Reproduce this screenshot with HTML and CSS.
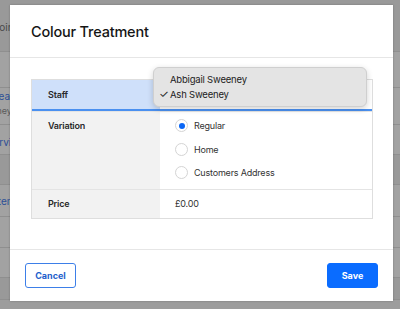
FILE: index.html
```html
<!DOCTYPE html>
<html lang="en">
<head>
    <meta charset="UTF-8">
    <meta name="viewport" content="width=device-width, initial-scale=1.0">
    <title>Colour Treatment</title>
    <link rel="stylesheet" href="styles.css">
</head>
<body>
    <!-- page behind the dialog, dimmed -->
    <div class="page">
        <div class="page-row r52 dark"><div class="cell"><span class="cut point">Point</span></div></div>
        <div class="page-row r36"></div>
        <div class="page-row r37"><div class="cell stack"><span class="cut link treat">Treat</span><span class="cut small">Sweeney</span></div></div>
        <div class="page-row r30"><div class="cell low"><span class="cut link serv">Servi</span></div></div>
        <div class="page-row r30 dark"></div>
        <div class="page-row r32"><div class="cell"><span class="cut link item">Items</span></div></div>
        <div class="page-row r31"></div>
        <div class="page-row r30"></div>
        <div class="page-row r22 dark"></div>
    </div>

    <div class="modal">
        <div class="modal-header">
            <h1>Colour Treatment</h1>
        </div>

        <div class="modal-body">
            <div class="details">
                <div class="row staff">
                    <div class="label">Staff</div>
                    <div class="value"></div>
                </div>
                <div class="row variation">
                    <div class="label">Variation</div>
                    <div class="value options">
                        <label class="option"><span class="radio checked"></span>Regular</label>
                        <label class="option"><span class="radio"></span>Home</label>
                        <label class="option"><span class="radio"></span>Customers Address</label>
                    </div>
                </div>
                <div class="row">
                    <div class="label">Price</div>
                    <div class="value">£0.00</div>
                </div>

                <div class="dropdown">
                    <div class="dropdown-item">Abbigail Sweeney</div>
                    <div class="dropdown-item selected"><span class="tick">✓</span>Ash Sweeney</div>
                </div>
            </div>
        </div>

        <div class="modal-footer">
            <button class="btn btn-outline">Cancel</button>
            <button class="btn btn-primary">Save</button>
        </div>
    </div>
</body>
</html>
```

FILE: styles.css
```css
body {
    margin: 0;
    padding: 0;
    background-color: #9d9d9d;
    font-family: 'Inter', 'Noto Sans', sans-serif;
    color: #222;
    overflow: hidden;
}

.page {
    display: flex;
    flex-direction: column;
    height: 309px;
}

.page-row {
    border-bottom: 1px solid #8f8f8f;
    background-color: #a2a2a2;
    display: flex;
    font-size: 10px;
    color: #4a4a4a;
    box-sizing: border-box;
    flex-shrink: 0;
}

.page-row.dark {
    background-color: #999;
}

.r22 { height: 22px; }
.r30 { height: 30px; }
.r31 { height: 31px; }
.r32 { height: 32px; }
.r36 { height: 36px; }
.r37 { height: 37px; }
.r52 { height: 52px; }

.cell {
    width: 10px;
    overflow: hidden;
    white-space: nowrap;
    display: flex;
    align-items: center;
}

.r52 .cell {
    padding-top: 3px;
}

.cell.stack {
    flex-direction: column;
    align-items: flex-start;
    padding-top: 2px;
}

.cell.low {
    padding-top: 4px;
}

.cut.point { margin-left: -7px; }
.cut.treat { margin-left: -11px; }
.cut.serv { margin-left: -13px; }
.cut.item { margin-left: -5px; }

.cut.link {
    color: #2c4f97;
}

.cut.small {
    font-size: 9px;
    margin-left: -27px;
    margin-top: 3px;
    color: #5a5a5a;
}

.modal {
    position: absolute;
    top: 5px;
    left: 10px;
    width: 383px;
    height: 296px;
    background-color: #fff;
    box-shadow: 0 0 2px rgba(0, 0, 0, 0.25);
    display: flex;
    flex-direction: column;
}

.modal-header {
    height: 52px;
    border-bottom: 1px solid #e6e6e6;
    display: flex;
    align-items: center;
    padding-left: 21px;
}

.modal-header h1 {
    margin: 0;
    font-size: 14.5px;
    font-weight: 500;
    color: #151515;
    letter-spacing: -0.2px;
}

.modal-body {
    flex: 1;
    padding: 21px 20px 0 21px;
}

.details {
    position: relative;
    border: 1px solid #dedede;
    font-size: 9px;
    letter-spacing: -0.2px;
}

.row {
    display: flex;
    border-top: 1px solid #e4e4e4;
}

.row:first-child {
    border-top: none;
}

.row .label {
    width: 112px;
    padding-left: 16px;
    background-color: #f2f2f2;
    font-weight: 600;
    color: #2a2a2a;
}

.row .value {
    flex: 1;
    padding-left: 15px;
    color: #333;
}

.row .label,
.row .value {
    display: flex;
    align-items: center;
    height: 28px;
}

.row.staff {
    border-bottom: 2px solid #4a90f0;
}

.row.staff .label {
    background-color: #cfe0fa;
    height: 29px;
}

.row.staff .value {
    height: 29px;
}

.row.variation .label {
    align-items: flex-start;
    padding-top: 8px;
    height: auto;
}

.row.variation .options {
    flex-direction: column;
    align-items: flex-start;
    height: auto;
    padding-top: 2px;
    padding-bottom: 4px;
}

.option {
    display: flex;
    align-items: center;
    height: 23.5px;
    color: #333;
}

.radio {
    width: 11px;
    height: 11px;
    border: 1px solid #d4d4d4;
    border-radius: 50%;
    margin-right: 6px;
    display: flex;
    align-items: center;
    justify-content: center;
    background-color: #fff;
}

.radio.checked::after {
    content: '';
    width: 6px;
    height: 6px;
    border-radius: 50%;
    background-color: #0a66f5;
}

.dropdown {
    position: absolute;
    top: -13px;
    left: 121px;
    width: 214px;
    height: 40px;
    box-sizing: border-box;
    padding-top: 4px;
    background-color: #e4e4e4;
    border: 1px solid #cfcfcf;
    border-radius: 6px;
    box-shadow: 0 2px 6px rgba(0, 0, 0, 0.18);
    font-size: 9.5px;
    color: #222;
}

.dropdown-item {
    height: 15px;
    line-height: 15px;
    padding-left: 16px;
    position: relative;
}

.dropdown-item .tick {
    position: absolute;
    left: 5px;
    font-size: 11px;
    font-weight: 400;
}

.modal-footer {
    height: 51px;
    border-top: 1px solid #e6e6e6;
    display: flex;
    align-items: center;
    justify-content: space-between;
    padding: 0 15px;
}

.btn {
    width: 51px;
    height: 25px;
    border-radius: 3px;
    font-family: 'Inter', 'Noto Sans', sans-serif;
    font-size: 9px;
    font-weight: 700;
    cursor: pointer;
}

.btn-outline {
    background-color: #fff;
    border: 1px solid #3d7fe8;
    color: #1f5fcc;
}

.btn-primary {
    background-color: #0a6cff;
    border: 1px solid #0a6cff;
    color: #fff;
}
```
